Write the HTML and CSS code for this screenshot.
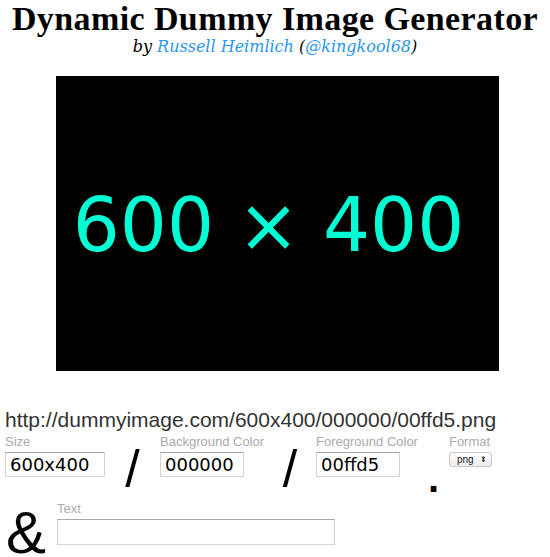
FILE: index.html
```html
<!DOCTYPE html>
<html>
<head>
<meta charset="utf-8">
<link rel="stylesheet" href="styles.css">
</head>
<body>
<h1 class="title">Dynamic Dummy Image Generator</h1>
<p class="byline">by <a href="#">Russell Heimlich</a> (<a href="#">@kingkool68</a>)</p>
<div class="preview"><span class="preview-text">600 × 400</span></div>
<p class="url">http://dummyimage.com/600x400/000000/00ffd5.png</p>
<div class="row">
  <div class="field">
    <label class="lbl">Size</label>
    <input class="box box-size" type="text" value="600x400">
  </div>
  <span class="sep slash slash1">/</span>
  <div class="field">
    <label class="lbl">Background Color</label>
    <input class="box box-color" type="text" value="000000">
  </div>
  <span class="sep slash slash2">/</span>
  <div class="field">
    <label class="lbl">Foreground Color</label>
    <input class="box box-color" type="text" value="00ffd5">
  </div>
  <span class="sep dot">.</span>
  <div class="field">
    <label class="lbl">Format</label>
    <span class="select">png <span class="arrows">⬍</span></span>
  </div>
</div>
<div class="row row2">
  <span class="amp">&amp;</span>
  <div class="field">
    <label class="lbl">Text</label>
    <input class="box box-text" type="text" value="">
  </div>
</div>
</body>
</html>
```
FILE: styles.css
```css
html, body { margin: 0; padding: 0; background: #fff; }
body { width: 550px; font-family: "Liberation Sans", Arial, sans-serif; color: #000; }
.title {
  margin: 0;
  padding-top: 1px;
  text-align: center;
  white-space: nowrap;
  font-family: "Liberation Serif", Georgia, serif;
  font-weight: bold;
  font-size: 34px;
  line-height: 36px;
  letter-spacing: 0.4px;
}
.byline {
  margin: 0;
  text-align: center;
  font-family: "DejaVu Serif", Georgia, serif;
  font-style: italic;
  font-size: 16px;
  line-height: 20px;
}
.byline a { color: #2a96ec; text-decoration: none; }
.preview {
  margin: 19px 0 0 56px;
  width: 443px;
  height: 295px;
  background: #000;
  display: flex;
  align-items: center;
  justify-content: center;
}
.preview-text {
  color: #00ffd5;
  font-family: "DejaVu Sans", Verdana, sans-serif;
  font-size: 74px;
  line-height: 1;
  margin-top: 2px;
  margin-right: 18px;
}
.url {
  margin: 37px 0 0 5px;
  font-size: 21px;
  line-height: 24px;
  color: #333;
}
.row {
  display: flex;
  align-items: flex-start;
  padding-left: 5px;
  margin-top: 3px;
}
.field { display: flex; flex-direction: column; }
.lbl {
  font-size: 13px;
  line-height: 14px;
  color: #aaa;
  height: 17px;
}
.box {
  box-sizing: border-box;
  height: 25px;
  border: 1px solid #d4d4d4;
  border-top-color: #a8a8a8;
  padding: 0 4px;
  margin: 0;
  font-family: "DejaVu Sans", Verdana, sans-serif;
  font-size: 18px;
  color: #000;
  background: #fff;
  outline: none;
}
.box-size { width: 100px; }
.box-color { width: 84px; }
.box-text { width: 278px; height: 26px; }
.sep { color: #000; }
.slash {
  font-family: "Liberation Sans", Arial, sans-serif;
  font-size: 52px;
  line-height: 52px;
  margin-top: 8px;
  text-align: center;
}
.slash1 { width: 55px; }
.slash2 { width: 52px; }
.dot {
  font-family: "Liberation Sans", Arial, sans-serif;
  font-size: 40px;
  line-height: 40px;
  margin-top: 23px;
  width: 31px;
  text-align: center;
  font-weight: bold;
}
.select {
  margin-top: 0;
  box-sizing: border-box;
  width: 43px;
  height: 15px;
  border: 1px solid #c8c8c8;
  border-radius: 3px;
  background: linear-gradient(#fff, #ececec);
  font-size: 10px;
  line-height: 13px;
  padding-left: 7px;
  color: #222;
  display: flex;
  justify-content: space-between;
}
.arrows { font-size: 8px; padding-right: 4px; color: #444; }
.row2 { margin-top: 4px; padding-left: 6px; align-items: flex-start; }
.amp {
  font-family: "Liberation Sans", Arial, sans-serif;
  font-size: 60px;
  line-height: 44px;
  margin-top: 9px;
  width: 51px;
}
```
